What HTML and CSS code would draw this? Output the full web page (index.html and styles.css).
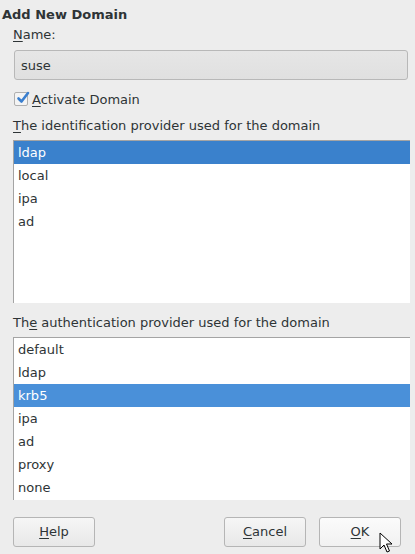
FILE: index.html
```
<!DOCTYPE html>
<html>
<head>
<meta charset="utf-8">
<link rel="stylesheet" href="styles.css">
</head>
<body>
<div class="dialog">
  <div class="title">Add New Domain</div>
  <div class="content">
    <div class="label"><u>N</u>ame:</div>
    <div class="input">suse</div>
    <div class="check-row">
      <span class="checkbox"><svg width="14" height="14" viewBox="0 0 14 14"><path d="M2.5 7.5 L5.5 10.5 L12 2" fill="none" stroke="#3a7fcf" stroke-width="2.6" stroke-linecap="round" stroke-linejoin="round"/></svg></span>
      <span><u>A</u>ctivate Domain</span>
    </div>
    <div class="label sec"><u>T</u>he identification provider used for the domain</div>
    <div class="list list1">
      <div class="row sel">ldap</div>
      <div class="row">local</div>
      <div class="row">ipa</div>
      <div class="row">ad</div>
    </div>
    <div class="label sec2">Th<u>e</u> authentication provider used for the domain</div>
    <div class="list list2">
      <div class="row">default</div>
      <div class="row">ldap</div>
      <div class="row sel2">krb5</div>
      <div class="row">ipa</div>
      <div class="row">ad</div>
      <div class="row">proxy</div>
      <div class="row">none</div>
    </div>
    <div class="buttons">
      <div class="btn"><u>H</u>elp</div>
      <div class="spacer"></div>
      <div class="btn"><u>C</u>ancel</div>
      <div class="btn ok"><u>O</u>K</div>
    </div>
  </div>
  <svg class="cursor" width="14" height="22" viewBox="0 0 14 22"><path d="M1 1 L1 17 L5 13 L8 20 L10.5 19 L7.5 12 L13 12 Z" fill="#fff" stroke="#000" stroke-width="1" stroke-linejoin="round"/></svg>
</div>
</body>
</html>
```
FILE: styles.css
```
html, body { margin: 0; padding: 0; }
body {
  width: 415px; height: 554px; overflow: hidden;
  background: #ededed;
  font-family: "DejaVu Sans", sans-serif;
  font-size: 13px;
  color: #2e3436;
}
.dialog { position: relative; width: 415px; height: 554px; }
u { text-decoration: underline; text-underline-offset: 2px; }
.title { font-weight: bold; padding: 6px 0 0 2px; line-height: 17px; color: #2e3436; }
.content { padding: 0 5px 0 13px; }
.label { line-height: 17px; margin-top: 3px; }
.input {
  margin: 7px 2px 0 1px; height: 30px; box-sizing: border-box;
  border: 1px solid #b8b8b8; border-radius: 3px;
  background: linear-gradient(#e6e6e6, #e0e0e0);
  padding: 6px 0 0 6px; line-height: 17px;
}
.check-row { display: flex; align-items: center; gap: 4px; margin-top: 10px; margin-left: 1px; height: 18px; }
.checkbox { width: 14px; height: 14px; display: flex; align-items: center; justify-content: center; border: 1px solid #b0b0b0; border-radius: 2px; background: #f4f4f4; box-sizing: border-box; overflow: visible; }
.checkbox svg { margin-left: 3px; margin-top: -3px; flex: none; }
.sec { margin-top: 9px; }
.sec2 { margin-top: 11px; }
.list {
  margin-top: 6px; background: #fff;
  border-top: 1px solid #a4a4a4; border-left: 1px solid #a4a4a4;
}
.list1 { height: 162px; }
.list2 { height: 162px; }
.row { height: 23px; line-height: 23px; padding-left: 4px; }
.sel { background: #3a81cc; color: #fff; }
.sel2 { background: #4a90d9; color: #fff; }
.buttons { display: flex; gap: 13px; margin-top: 17px; padding-right: 9px; }
.spacer { flex: 1; }
.btn {
  width: 82px; height: 30px; box-sizing: border-box;
  border: 1px solid #b5b5b5; border-radius: 3px;
  background: linear-gradient(#f6f6f6, #e8e8e8);
  text-align: center; line-height: 28px;
}
.ok { background: linear-gradient(#fbfbfb, #f1f1f1); }
.cursor { position: absolute; left: 379px; top: 532px; }
```
